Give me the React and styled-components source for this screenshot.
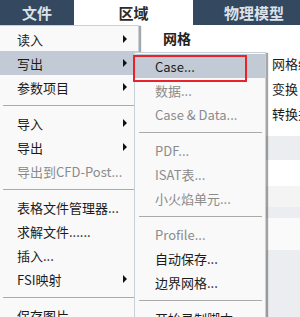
import React from 'react'
import styled, { createGlobalStyle } from 'styled-components'

const Global = createGlobalStyle`
    html, body {
        margin: 0;
        padding: 0;
        background: #ffffff;
        overflow: hidden;
    }
    body {
        font-family: "Noto Sans CJK SC", "Noto Sans", sans-serif;
    }
`

const Page = styled.div`
    position: relative;
    width: 300px;
    height: 317px;
    overflow: hidden;
    background: #ffffff;
`

const TabBar = styled.div`
    display: flex;
    height: 25px;
    background: #34495f;
`

const Tab = styled.div`
    flex: 0 0 ${p => p.$w}px;
    display: flex;
    align-items: center;
    justify-content: center;
    font-size: 15px;
    font-weight: bold;
    color: ${p => (p.$active ? '#2b2b2b' : '#dde2e8')};
    background: ${p => (p.$active ? '#ffffff' : '#34495f')};
`

const Ribbon = styled.div`
    display: flex;
    flex-direction: column;
`

const GroupTitle = styled.div`
    height: 26px;
    padding-left: 163px;
    display: flex;
    align-items: center;
    font-size: 14px;
    font-weight: bold;
    color: #222;
`

const RibbonItem = styled.div`
    height: 25px;
    padding-left: 272px;
    display: flex;
    align-items: center;
    font-size: 13px;
    color: #1c1c1c;
    white-space: nowrap;
`

const Band = styled.div`
    height: ${p => p.$h}px;
    background: ${p => p.$bg};
`

const Menu = styled.div`
    position: absolute;
    display: flex;
    flex-direction: column;
    background: #f9f9f9;
    border: 1px solid #c9d0d8;
    box-shadow: 2px 1px 1px rgba(0, 0, 0, 0.35);
    font-size: 13px;
`

const MainMenu = styled(Menu)`
    left: -1px;
    top: 25px;
    width: 138px;
    height: 310px;
    padding-top: 1px;
`

const SubMenu = styled(Menu)`
    left: 134px;
    top: 52px;
    width: 130px;
    height: 280px;
    padding-top: 1px;
`

const Item = styled.div`
    height: 24px;
    flex: 0 0 24px;
    display: flex;
    align-items: center;
    justify-content: space-between;
    padding: 0 11px 0 ${p => p.$indent}px;
    white-space: nowrap;
    color: ${p => (p.$disabled ? '#8b8b8b' : '#1b1b1b')};
    background: ${p => (p.$active ? '#c2cbd5' : 'transparent')};
`

const Arrow = styled.span`
    width: 0;
    height: 0;
    border-left: 4px solid #111;
    border-top: 4px solid transparent;
    border-bottom: 4px solid transparent;
`

const Separator = styled.div`
    flex: 0 0 12px;
    display: flex;
    align-items: center;
    padding: 0 ${p => p.$right}px 0 ${p => p.$left}px;

    &::after {
        content: '';
        flex: 1;
        height: 1px;
        background: #aaaaaa;
    }
`

const Highlight = styled.div`
    position: absolute;
    left: 133px;
    top: 55px;
    width: 110px;
    height: 23px;
    border: 2px solid #e8232b;
`

const tabs = [
    { label: '文件', w: 74 },
    { label: '区域', w: 119, active: true },
    { label: '物理模型', w: 122 },
]

const mainItems = [
    { label: '读入', sub: true },
    { label: '写出', sub: true, active: true },
    { label: '参数项目', sub: true },
    { sep: true },
    { label: '导入', sub: true },
    { label: '导出', sub: true },
    { label: '导出到CFD-Post...', disabled: true },
    { sep: true },
    { label: '表格文件管理器...' },
    { label: '求解文件......' },
    { label: '插入...' },
    { label: 'FSI映射', sub: true },
    { sep: true },
    { label: '保存图片' },
]

const subItems = [
    { label: 'Case...', active: true },
    { label: '数据...', disabled: true },
    { label: 'Case & Data...', disabled: true },
    { sep: true },
    { label: 'PDF...', disabled: true },
    { label: 'ISAT表...', disabled: true },
    { label: '小火焰单元...', disabled: true },
    { sep: true },
    { label: 'Profile...', disabled: true },
    { label: '自动保存...' },
    { label: '边界网格...' },
    { sep: true },
    { label: '开始录制脚本' },
]

const bands = [
    { h: 10, bg: '#ffffff' },
    { h: 24, bg: '#ebedf0' },
    { h: 26, bg: '#ffffff' },
    { h: 21, bg: '#f4f4f5' },
    { h: 11, bg: '#ebedf0' },
    { h: 32, bg: '#fafafa' },
    { h: 70, bg: '#ebedf0' },
]

const renderItems = (items, indent, sepLeft, sepRight) =>
    items.map((item, i) => {
        if (item.sep) {
            return <Separator key={i} $left={sepLeft} $right={sepRight} />
        }
        return (
            <Item key={i} $indent={indent} $active={item.active} $disabled={item.disabled}>
                <span>{item.label}</span>
                {item.sub && <Arrow />}
            </Item>
        )
    })

const App = () => {
    return (
        <>
            <Global />
            <Page>
                <TabBar>
                    {tabs.map(t => (
                        <Tab key={t.label} $w={t.w} $active={t.active}>{t.label}</Tab>
                    ))}
                </TabBar>
                <Ribbon>
                    <GroupTitle>网格</GroupTitle>
                    <RibbonItem>网格编辑</RibbonItem>
                    <RibbonItem>变换</RibbonItem>
                    <RibbonItem>转换并</RibbonItem>
                    {bands.map((b, i) => (
                        <Band key={i} $h={b.h} $bg={b.bg} />
                    ))}
                </Ribbon>
                <MainMenu>{renderItems(mainItems, 17, 3, 3)}</MainMenu>
                <SubMenu>{renderItems(subItems, 20, 4, 3)}</SubMenu>
                <Highlight />
            </Page>
        </>
    )
}

export default App
